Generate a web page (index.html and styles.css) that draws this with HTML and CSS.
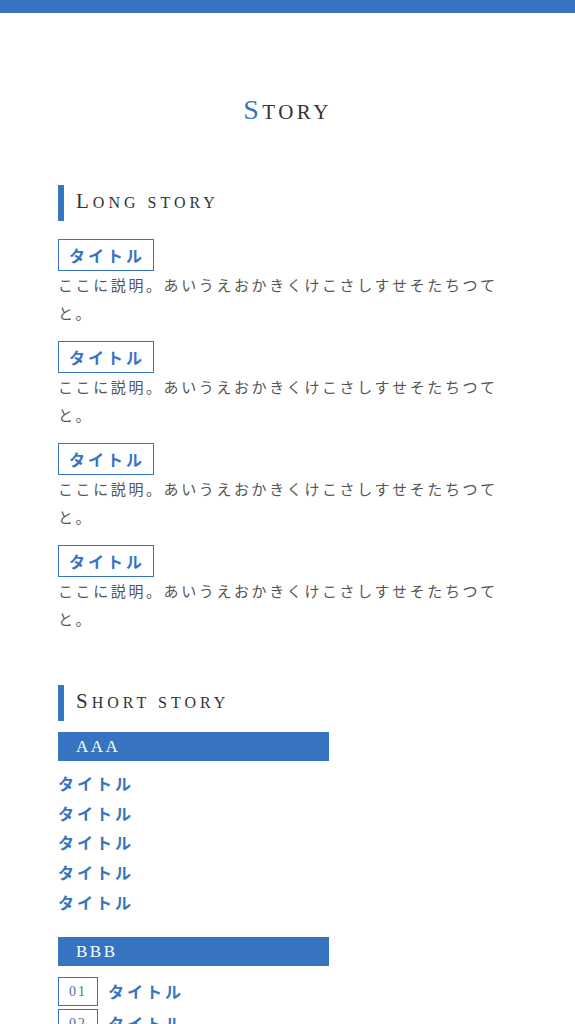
FILE: index.html
```html
<!DOCTYPE html>
<html lang="ja">
<head>
    <meta charset="UTF-8">
    <meta name="viewport" content="width=device-width, initial-scale=1.0">
    <title>Story</title>
    <link rel="stylesheet" href="styles.css">
</head>
<body>
    <header class="top-bar"></header>
    <main class="container">
        <h1 class="page-title">Story</h1>

        <section class="story-section">
            <h2 class="section-title">Long story</h2>
            <div class="long-item">
                <span class="tag">タイトル</span>
                <p class="desc">ここに説明。あいうえおかきくけこさしすせそたちつてと。</p>
            </div>
            <div class="long-item">
                <span class="tag">タイトル</span>
                <p class="desc">ここに説明。あいうえおかきくけこさしすせそたちつてと。</p>
            </div>
            <div class="long-item">
                <span class="tag">タイトル</span>
                <p class="desc">ここに説明。あいうえおかきくけこさしすせそたちつてと。</p>
            </div>
            <div class="long-item">
                <span class="tag">タイトル</span>
                <p class="desc">ここに説明。あいうえおかきくけこさしすせそたちつてと。</p>
            </div>
        </section>

        <section class="story-section short">
            <h2 class="section-title">Short story</h2>
            <h3 class="group-title">AAA</h3>
            <ul class="title-list">
                <li>タイトル</li>
                <li>タイトル</li>
                <li>タイトル</li>
                <li>タイトル</li>
                <li>タイトル</li>
            </ul>
            <h3 class="group-title bbb">BBB</h3>
            <ul class="num-list">
                <li><span class="num">01</span><span class="num-title">タイトル</span></li>
                <li><span class="num">02</span><span class="num-title">タイトル</span></li>
                <li><span class="num">03</span><span class="num-title">タイトル</span></li>
            </ul>
        </section>
    </main>
</body>
</html>
```

FILE: styles.css
```css
body {
    margin: 0;
    padding: 0;
    background-color: #fff;
    color: #333;
    font-family: "Liberation Serif", "Noto Sans CJK JP", serif;
}
.top-bar {
    height: 13px;
    background-color: #3674c1;
}
.container {
    padding: 0 58px;
}
.page-title {
    margin: 83px 0 0;
    height: 32px;
    text-align: center;
    font-size: 21px;
    font-weight: normal;
    line-height: 32px;
    letter-spacing: 3.5px;
    text-transform: uppercase;
    color: #333;
}
.page-title::first-letter {
    font-size: 28px;
    line-height: 1;
    color: #3674c1;
}
.section-title {
    margin: 57px 0 0;
    height: 36px;
    border-left: 6px solid #3674c1;
    padding-left: 12px;
    font-size: 16px;
    font-weight: normal;
    line-height: 36px;
    letter-spacing: 4px;
    text-transform: uppercase;
    color: #333;
}
.section-title::first-letter {
    font-size: 21px;
    line-height: 1;
}
.story-section.short .section-title {
    margin-top: 52px;
}
.long-item {
    margin-top: 18px;
}
.long-item + .long-item {
    margin-top: 14px;
}
.tag {
    display: inline-block;
    border: 1px solid #3674c1;
    padding: 0 8px 0 10px;
    line-height: 30px;
    font-family: "Noto Sans CJK JP", sans-serif;
    font-size: 16px;
    font-weight: bold;
    letter-spacing: 3px;
    color: #3674c1;
    vertical-align: top;
}
.desc {
    margin: 0;
    max-width: 452px;
    font-family: "Noto Sans CJK JP", sans-serif;
    font-size: 15px;
    line-height: 28px;
    letter-spacing: 2.6px;
    color: #555;
}
.group-title {
    margin: 11px 0 0;
    width: 253px;
    padding-left: 18px;
    background-color: #3674c1;
    color: #fff;
    font-size: 17px;
    font-weight: normal;
    line-height: 29px;
    letter-spacing: 2.5px;
}
.group-title.bbb {
    margin-top: 19px;
}
.title-list {
    list-style: none;
    margin: 8px 0 0;
    padding: 0;
}
.title-list li {
    font-family: "Noto Sans CJK JP", sans-serif;
    font-size: 16px;
    font-weight: bold;
    line-height: 29.7px;
    letter-spacing: 3px;
    color: #3674c1;
}
.num-list {
    list-style: none;
    margin: 11px 0 0;
    padding: 0;
}
.num-list li {
    display: flex;
    align-items: center;
    gap: 10px;
    margin-bottom: 3px;
}
.num {
    box-sizing: border-box;
    width: 40px;
    height: 29px;
    border: 1px solid #3674c1;
    text-align: center;
    font-size: 14px;
    line-height: 27px;
    letter-spacing: 2px;
    color: #4a6f9c;
}
.num-title {
    font-family: "Noto Sans CJK JP", sans-serif;
    font-size: 16px;
    font-weight: bold;
    letter-spacing: 3px;
    color: #3674c1;
}
```
